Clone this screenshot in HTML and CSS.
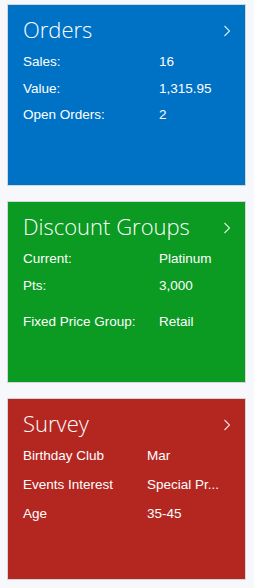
FILE: index.html
```html
<!DOCTYPE html>
<html lang="en">
<head>
  <meta charset="UTF-8" />
  <meta name="viewport" content="width=device-width, initial-scale=1" />
  <title>Customer tiles</title>
  <link rel="stylesheet" href="styles.css">
</head>
<body>
  <main class="tiles">
    <section class="tile tile-orders">
      <header class="tile-head">
        <h2>Orders</h2>
        <svg class="chevron" width="8" height="12" viewBox="0 0 8 12"><polyline points="1.5,1 6.5,6 1.5,11" /></svg>
      </header>
      <dl class="facts">
        <dt>Sales:</dt><dd>16</dd>
        <dt>Value:</dt><dd>1,315.95</dd>
        <dt>Open Orders:</dt><dd>2</dd>
      </dl>
    </section>

    <section class="tile tile-discount">
      <header class="tile-head">
        <h2>Discount Groups</h2>
        <svg class="chevron" width="8" height="12" viewBox="0 0 8 12"><polyline points="1.5,1 6.5,6 1.5,11" /></svg>
      </header>
      <dl class="facts">
        <dt>Current:</dt><dd>Platinum</dd>
        <dt>Pts:</dt><dd>3,000</dd>
        <dt class="spaced">Fixed Price Group:</dt><dd class="spaced">Retail</dd>
      </dl>
    </section>

    <section class="tile tile-survey">
      <header class="tile-head">
        <h2>Survey</h2>
        <svg class="chevron" width="8" height="12" viewBox="0 0 8 12"><polyline points="1.5,1 6.5,6 1.5,11" /></svg>
      </header>
      <dl class="facts">
        <dt>Birthday Club</dt><dd>Mar</dd>
        <dt>Events Interest</dt><dd>Special Pr...</dd>
        <dt>Age</dt><dd>35-45</dd>
      </dl>
    </section>
  </main>
</body>
</html>
```

FILE: styles.css
```css
:root {
  --blue: #0072c6;
  --green: #0b9a22;
  --red: #b42721;
  --edge: #d4d6da;
}

body {
  margin: 0;
  background: #f7f8fb;
  font-family: 'Liberation Sans', Arial, sans-serif;
  color: #fff;
}

.tiles {
  display: flex;
  flex-direction: column;
  gap: 15px;
  padding: 4px 8px 0 7px;
}

.tile {
  box-sizing: border-box;
  height: 182px;
  border: 1px solid var(--edge);
  padding: 9px 15px 0 15px;
}

.tile-orders { background: var(--blue); }
.tile-discount { background: var(--green); }
.tile-survey { background: var(--red); }

.tile-head {
  display: flex;
  align-items: center;
  justify-content: space-between;
  height: 30px;
}

.tile-head h2 {
  margin: 0;
  font-family: 'Open Sans', 'Noto Sans', sans-serif;
  font-weight: 300;
  font-size: 22px;
  line-height: 30px;
}

.chevron {
  margin: 4px -1px 0 0;
  fill: none;
  stroke: #fff;
  stroke-width: 1.1;
  opacity: 0.85;
}

.facts {
  display: grid;
  grid-template-columns: 136px 1fr;
  margin: 5px 0 0;
  font-size: 13.5px;
  line-height: 26.5px;
}

.facts dt,
.facts dd {
  margin: 0;
  white-space: nowrap;
}

.facts .spaced {
  margin-top: 10px;
}

.tile-survey .facts {
  grid-template-columns: 124px 1fr;
  line-height: 29px;
  margin-top: 3px;
}
```
